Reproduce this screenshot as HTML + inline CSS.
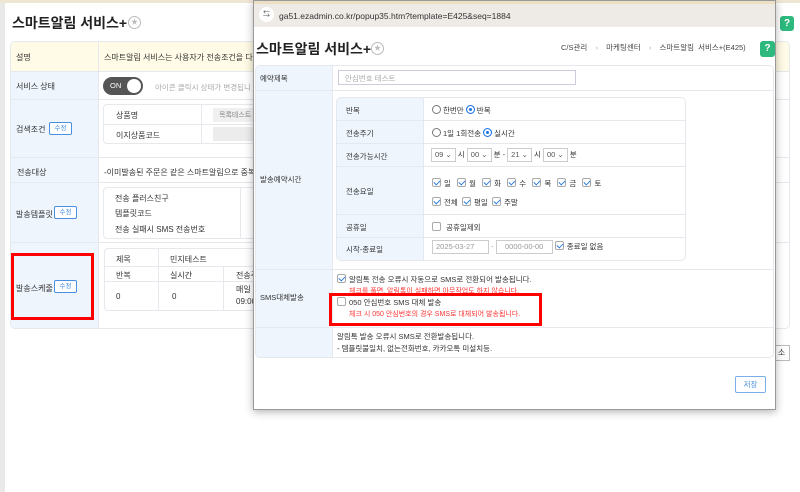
<!DOCTYPE html>
<html><head><meta charset="utf-8"><style>
*{margin:0;padding:0;box-sizing:border-box}
body{width:800px;height:492px;overflow:hidden;background:#fff;font-family:"Liberation Sans","Noto Sans CJK KR",sans-serif;color:#333;position:relative;font-size:8px}
.a{position:absolute}
.lbl{background:#eef5fd}
.btn{position:absolute;border:1px solid #4a90e2;color:#4a90e2;background:#fff;font-size:6.5px;border-radius:2px;text-align:center;line-height:11px;height:13px;width:23px}
.cb{display:inline-block;width:9px;height:9px;border:1px solid #aaa;border-radius:2px;vertical-align:-1px;margin-right:3px;background:#fff;position:relative}
.cb.on::after{content:"";position:absolute;left:2px;top:0px;width:3px;height:5px;border:solid #2a7de1;border-width:0 1.5px 1.5px 0;transform:rotate(45deg)}
.rd{display:inline-block;width:9px;height:9px;border:1px solid #777;border-radius:50%;vertical-align:-1px;margin-right:2px;background:#fff}
.rd.on{border-color:#1a73e8;box-shadow:inset 0 0 0 2px #fff;background:#1a73e8}
.sel{display:inline-block;border:1px solid #ccc;height:14px;line-height:12px;padding:0 3px;color:#555;font-size:7.5px;vertical-align:middle}
.hl{border-bottom:1px solid #e5e8ec}
</style></head><body>
<div class="a" style="left:0;top:0;width:5px;height:492px;background:#e9e9e9"></div>
<div class="a" style="left:0;top:0;width:800px;height:3px;background:#efe6d2"></div>
<!-- background page -->
<div class="a" style="left:12px;top:13px;font-size:14px;font-weight:bold;color:#222">스마트알림 서비스+</div>
<div class="a" style="left:128px;top:16px;width:13px;height:13px;border:1px solid #bbb;border-radius:50%;color:#bbb;font-size:7px;text-align:center;line-height:11px">★</div>
<div class="a" style="left:780px;top:16px;width:14px;height:15px;background:#2db87d;border-radius:3px;color:#fff;font-size:10px;text-align:center;line-height:15px;font-weight:bold">?</div>
<div class="a" style="left:10px;top:41px;width:780px;height:288px;border:1px solid #e5e8ec;border-radius:5px;overflow:hidden">
 <div class="a" style="left:0;top:0;width:780px;height:30px;background:#fffbe6;border-bottom:1px solid #e5e8ec"></div>
 <div class="a lbl" style="left:0;top:30px;width:88px;height:258px"></div>
 <div class="a" style="left:87px;top:0;width:1px;height:288px;background:#e5e8ec"></div>
 <div class="a hl" style="left:0;top:57px;width:780px;height:1px"></div>
 <div class="a hl" style="left:0;top:115px;width:780px;height:1px"></div>
 <div class="a hl" style="left:0;top:140px;width:780px;height:1px"></div>
 <div class="a hl" style="left:0;top:200px;width:780px;height:1px"></div>
</div>
<div class="a" style="left:16px;top:52px">설명</div>
<div class="a" style="left:104px;top:52px">스마트알림 서비스는 사용자가 전송조건을 다</div>
<div class="a" style="left:16px;top:81px">서비스 상태</div>
<div class="a" style="left:103px;top:77px;width:40px;height:18px;background:#555;border-radius:9px;color:#fff;font-size:7.5px;line-height:18px;padding-left:7px">ON<span style="position:absolute;right:2px;top:2px;width:14px;height:14px;border-radius:50%;background:#fff"></span></div>
<div class="a" style="left:155px;top:82px;color:#aaa;font-size:7.5px">아이콘 클릭시 상태가 변경됩니</div>
<div class="a" style="left:16px;top:124px">검색조건</div><div class="btn" style="left:49px;top:122px">수정</div>
<div class="a" style="left:103px;top:104px;width:160px;height:40px;border:1px solid #e5e8ec;border-radius:4px"></div>
<div class="a" style="left:104px;top:124px;width:150px;height:1px;background:#e5e8ec"></div>
<div class="a" style="left:201px;top:104px;width:1px;height:40px;background:#e5e8ec"></div>
<div class="a" style="left:116px;top:110px">상품명</div><div class="a" style="left:213px;top:108px;width:45px;height:14px;background:#f0f0f0;color:#888;font-size:7px;padding:2px 6px;white-space:nowrap;overflow:hidden">목록테스트</div>
<div class="a" style="left:116px;top:130px">이지상품코드</div><div class="a" style="left:213px;top:127px;width:45px;height:14px;background:#ececec"></div>
<div class="a" style="left:17px;top:167px">전송대상</div>
<div class="a" style="left:104px;top:167px">-이미발송된 주문은 같은 스마트알림으로 중복</div>
<div class="a" style="left:16px;top:209px">발송템플릿</div><div class="btn" style="left:54px;top:206px">수정</div>
<div class="a" style="left:103px;top:187px;width:160px;height:52px;border:1px solid #e5e8ec;border-radius:4px"></div>
<div class="a" style="left:240px;top:188px;width:1px;height:50px;background:#e5e8ec"></div>
<div class="a" style="left:115px;top:193px">전송 플러스친구</div>
<div class="a" style="left:115px;top:208px">템플릿코드</div>
<div class="a" style="left:115px;top:224px">전송 실패시 SMS 전송번호</div>
<div class="a" style="left:104px;top:248px;width:160px;height:63px;border:1px solid #e5e8ec;border-radius:4px"></div>
<div class="a" style="left:105px;top:266px;width:150px;height:1px;background:#e5e8ec"></div>
<div class="a" style="left:105px;top:281px;width:150px;height:1px;background:#e5e8ec"></div>
<div class="a" style="left:158px;top:249px;width:1px;height:61px;background:#e5e8ec"></div>
<div class="a" style="left:223px;top:267px;width:1px;height:43px;background:#e5e8ec"></div>
<div class="a" style="left:116px;top:254px">제목</div><div class="a" style="left:170px;top:254px">민지테스트</div>
<div class="a" style="left:116px;top:270px">반복</div><div class="a" style="left:170px;top:270px">실시간</div><div class="a" style="left:236px;top:270px">전송주</div>
<div class="a" style="left:116px;top:292px">0</div><div class="a" style="left:172px;top:292px">0</div><div class="a" style="left:236px;top:284px;line-height:12px">매일<br>09:00</div>
<div class="a" style="left:16px;top:283px">발송스케줄</div><div class="btn" style="left:54px;top:280px">수정</div>
<div class="a" style="left:11px;top:253px;width:83px;height:67px;border:3px solid #f00"></div>
<div class="a" style="left:773px;top:345px;width:17px;height:16px;border:1px solid #bbb;font-size:8px;text-align:center;line-height:14px;background:#fff">소</div>
<!-- popup -->
<div class="a" style="left:253px;top:0;width:523px;height:410px;background:#fff;border:1px solid #999;box-shadow:0 2px 8px rgba(0,0,0,.3)">
 <div class="a" style="left:0;top:0;width:521px;height:26px;background:#eeeae6;border-top:3px solid #ecdfc3"></div>
 <div class="a" style="left:5px;top:6px;width:15px;height:15px;border-radius:50%;background:#fff;font-size:7px;text-align:center;line-height:15px;color:#555">⇆</div>
 <div class="a" style="left:25px;top:10px;font-size:8.5px;color:#333">ga51.ezadmin.co.kr/popup35.htm?template=E425&amp;seq=1884</div>
 <div class="a" style="left:2px;top:38px;font-size:14px;font-weight:bold;color:#222">스마트알림 서비스+</div>
 <div class="a" style="left:117px;top:41px;width:13px;height:13px;border:1px solid #bbb;border-radius:50%;color:#bbb;font-size:7px;text-align:center;line-height:11px">★</div>
 <div class="a" style="left:307px;top:41px;font-size:7.5px;color:#444;word-spacing:2px">C/S관리 <span style="color:#aaa">&nbsp;›&nbsp;</span> 마케팅센터 <span style="color:#aaa">&nbsp;›&nbsp;</span> 스마트알림 서비스+(E425)</div>
 <div class="a" style="left:506px;top:40px;width:15px;height:16px;background:#2db87d;border-radius:3px;color:#fff;font-size:10px;text-align:center;line-height:16px;font-weight:bold">?</div>
</div>
<div class="a" style="left:255px;top:65px;width:519px;height:293px;border:1px solid #e5e8ec;border-radius:5px;overflow:hidden">
 <div class="a lbl" style="left:0;top:0;width:77px;height:293px;border-right:1px solid #e5e8ec"></div>
 <div class="a hl" style="left:0;top:24px;width:519px;height:1px"></div>
 <div class="a hl" style="left:0;top:203px;width:519px;height:1px"></div>
 <div class="a hl" style="left:0;top:261px;width:519px;height:1px"></div>
</div>
<div class="a" style="left:260px;top:73px;font-size:7.5px">예약제목</div>
<div class="a" style="left:338px;top:70px;width:238px;height:15px;border:1px solid #ccd;color:#aaa;font-size:7.5px;padding:2px 6px">안심번호 테스트</div>
<div class="a" style="left:260px;top:174px;font-size:7.5px">발송예약시간</div>
<div class="a" style="left:336px;top:97px;width:350px;height:164px;border:1px solid #e5e8ec;border-radius:5px;overflow:hidden;font-size:7.5px">
 <div class="a lbl" style="left:0;top:0;width:87px;height:164px;border-right:1px solid #e5e8ec"></div>
 <div class="a hl" style="left:0;top:22px;width:350px;height:1px"></div>
 <div class="a hl" style="left:0;top:45px;width:350px;height:1px"></div>
 <div class="a hl" style="left:0;top:68px;width:350px;height:1px"></div>
 <div class="a hl" style="left:0;top:116px;width:350px;height:1px"></div>
 <div class="a hl" style="left:0;top:139px;width:350px;height:1px"></div>
 <div class="a" style="left:9px;top:7px">반복</div>
 <div class="a" style="left:9px;top:30px">전송주기</div>
 <div class="a" style="left:9px;top:53px">전송가능시간</div>
 <div class="a" style="left:9px;top:88px">전송요일</div>
 <div class="a" style="left:9px;top:124px">공휴일</div>
 <div class="a" style="left:9px;top:146px">시작-종료일</div>
 <div class="a" style="left:95px;top:7px"><span class="rd"></span>한번만 <span class="rd on"></span>반복</div>
 <div class="a" style="left:95px;top:30px"><span class="rd"></span>1일 1회전송 <span class="rd on"></span>실시간</div>
 <div class="a" style="left:94px;top:50px"><span class="sel">09 ⌄</span> 시 <span class="sel">00 ⌄</span> 분 - <span class="sel">21 ⌄</span> 시 <span class="sel">00 ⌄</span> 분</div>
 <div class="a" style="left:95px;top:80px;word-spacing:1px"><span class="cb on"></span>일 &nbsp;<span class="cb on"></span>월 &nbsp;<span class="cb on"></span>화 &nbsp;<span class="cb on"></span>수 &nbsp;<span class="cb on"></span>목 &nbsp;<span class="cb on"></span>금 &nbsp;<span class="cb on"></span>토</div>
 <div class="a" style="left:95px;top:99px"><span class="cb on"></span>전체 &nbsp;<span class="cb on"></span>평일 &nbsp;<span class="cb on"></span>주말</div>
 <div class="a" style="left:95px;top:124px"><span class="cb"></span> 공휴일제외</div>
 <div class="a" style="left:95px;top:142px;color:#999"><span class="sel" style="width:57px;color:#999">2025-03-27</span> - <span class="sel" style="width:57px;color:#999;text-align:center">0000-00-00</span> <span style="color:#333"><span class="cb on"></span>종료일 없음</span></div>
</div>
<div class="a" style="left:260px;top:292px;font-size:7.5px">SMS대체발송</div>
<div class="a" style="left:337px;top:274px;font-size:7.5px"><span class="cb on"></span>알림톡 전송 오류시 자동으로 SMS로 전환되어 발송됩니다.</div>
<div class="a" style="left:349px;top:286px;font-size:7px;color:#f33">체크를 풀면, 알림톡이 실패하면 아무작업도 하지 않습니다.</div>
<div class="a" style="left:337px;top:297px;font-size:7.5px"><span class="cb"></span>050 안심번호 SMS 대체 발송</div>
<div class="a" style="left:349px;top:309px;font-size:7px;color:#f33">체크 시 050 안심번호의 경우 SMS로 대체되어 발송됩니다.</div>
<div class="a" style="left:329px;top:293px;width:213px;height:33px;border:3px solid #f00"></div>
<div class="a" style="left:337px;top:331px;font-size:7.5px;line-height:12px">알림톡 발송 오류시 SMS로 전환발송됩니다.<br>- 템플릿불일치, 없는전화번호, 카카오톡 미설치등.</div>
<div class="a" style="left:735px;top:376px;width:31px;height:17px;border:1px solid #7aaee8;border-radius:2px;font-size:7.5px;text-align:center;line-height:15px;color:#4a90e2">저장</div>
</body></html>
